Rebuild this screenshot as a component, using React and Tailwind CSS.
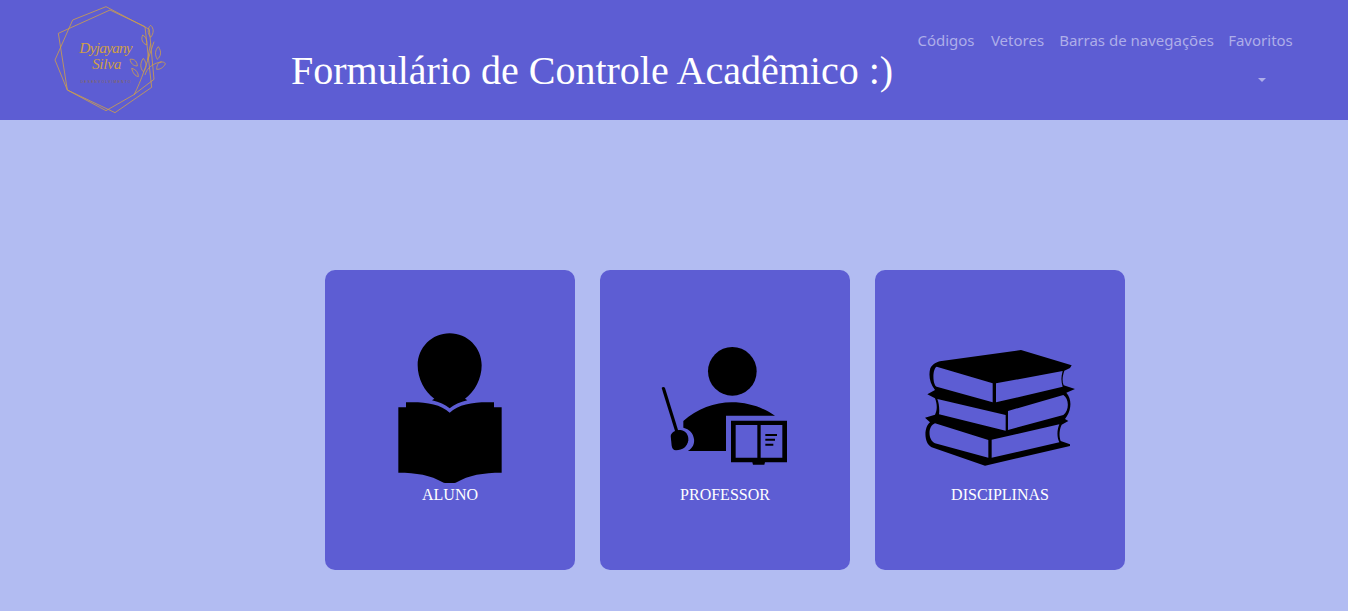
import React from "react";

const NAV = [
  { label: "Códigos", width: "w-[74px]" },
  { label: "Vetores", width: "w-[69px]" },
  { label: "Barras de navegações", width: "w-[169px]" },
  { label: "Favoritos", width: "w-[79px]" },
];

const LogoIcon = () => (
  <svg viewBox="0 0 510 360" className="w-[170px] h-[120px] shrink-0" fill="none" stroke="#cf9f48" strokeWidth="2.4">
    <path d="M128 60 228 20 358 88 372 238 310 285 228 332 112 270 75 180Z" />
    <path d="M85 100 240 30 345 80 365 262 255 338 112 270Z" />
    <path d="M312 285C335 240 350 190 372 125M345 225C352 200 372 190 395 185M352 180 362 130" />
    <path d="M362 76C372 85 372 100 362 112 352 100 352 85 362 76ZM338 105C350 112 352 125 350 135 338 130 332 118 338 105ZM385 140C396 155 392 170 382 178 374 165 375 150 385 140ZM300 178C315 175 322 188 322 198 310 198 302 190 300 178ZM340 175C352 190 350 205 340 215 330 205 330 188 340 175ZM385 190C398 182 406 188 406 192 398 205 390 208 380 208 380 200 382 195 385 190ZM305 205C318 208 325 218 325 230 315 228 308 218 305 205Z" />
    <text x="148" y="158" fill="#cf9f48" stroke="none" fontFamily="'Liberation Serif', serif" fontStyle="italic" fontSize="46" textLength="160">Dyjayany</text>
    <text x="186" y="206" fill="#cf9f48" stroke="none" fontFamily="'Liberation Serif', serif" fontStyle="italic" fontSize="46" textLength="88">Silva</text>
    <text x="152" y="248" fill="#8f6a45" stroke="none" fontFamily="'Liberation Sans', sans-serif" fontSize="10" textLength="150">DESENVOLVIMENTO</text>
  </svg>
);

const StudentIcon = () => (
  <svg viewBox="-15 39 450 450" className="w-[150px] h-[150px]" fill="#000">
    <path d="M209 40C262 40 305 83 305 136 305 175 285 215 255 236L262 241C240 246 222 254 209 265 196 254 178 246 156 241L163 236C133 215 113 175 113 136 113 83 156 40 209 40Z" />
    <path d="M55 262H78V247C130 245 180 250 209 278 238 250 288 245 342 247V262H365V458C310 458 265 465 230 487 222 491 196 491 188 487 153 465 108 458 55 458Z" />
  </svg>
);

const TeacherIcon = () => (
  <svg viewBox="0 -6 450 450" className="w-[150px] h-[150px]" fill="#000">
    <circle cx="247" cy="109" r="73" />
    <path d="M100 258C140 222 195 202 245 202 295 202 340 218 375 242H228V348H113C128 340 134 325 132 312 130 295 118 282 100 278Z" />
    <path d="M35 159C37 155 43 155 45 159L85 288 76 291Z" />
    <path d="M62 302C66 290 78 285 92 285 108 287 116 300 115 316 112 336 98 345 78 346 70 346 66 340 65 332Z" />
    <path fillRule="evenodd" d="M243 257H411V382H345L343 389H309L307 382H243ZM257 270V368H322V270ZM332 270V368H397V270Z" />
    <path d="M346 297H381V303H346ZM346 311H375V317H346ZM346 326H370V332H346Z" />
  </svg>
);

const BooksIcon = () => (
  <svg viewBox="30 -21 450 450" className="w-[150px] h-[150px]">
    <path fill="#000" d="M80 63 318 30 470 76 465 84 448 92C442 110 441 125 446 136L480 147 454 158C470 175 470 205 456 228L450 237 460 243 440 254C432 270 432 290 437 303L465 313 465 318 210 377 50 322C26 310 26 262 45 247L30 233 60 224C68 208 66 190 60 175L37 163 60 150C44 130 40 105 46 85 52 72 66 65 80 63Z" />
    <path fill="#5d5dd3" d="M65 80 233 130V187L65 140C52 134 52 86 65 80ZM243 130 443 93C438 110 438 125 443 140L243 187ZM67 177 272 225V272L72 223C74 208 72 190 67 177ZM279 213 445 165C462 175 464 210 445 225L279 270ZM60 250 220 300V353L60 310C38 300 38 258 60 250ZM230 299 433 253C426 270 425 290 433 307L230 353Z" />
  </svg>
);

const CARDS = [
  { label: "ALUNO", Icon: StudentIcon },
  { label: "PROFESSOR", Icon: TeacherIcon },
  { label: "DISCIPLINAS", Icon: BooksIcon },
];

export default function App() {
  return (
    <div className="min-h-[611px] bg-[#b2bcf2] font-['Liberation_Serif',serif]">
      <header className="h-[120px] bg-[#5d5dd3] flex pl-[30px] pr-[48px]">
        <LogoIcon />
        <h1 className="ml-[91px] mt-[47px] w-[606px] text-[40px] leading-[48px] text-white whitespace-nowrap">
          Formulário de Controle Acadêmico :)
        </h1>
        <nav className="ml-auto flex flex-col items-end pt-[28px] font-['Noto_Sans',sans-serif] text-[15px] leading-[24px] text-[#aeaee9]">
          <ul className="flex">
            {NAV.map((item) => (
              <li key={item.label} className={`${item.width} text-center whitespace-nowrap`}>
                {item.label}
              </li>
            ))}
          </ul>
          <div className="w-[76px] h-[24px] mt-[17px] flex items-center justify-center">
            <span className="mt-[-2px] border-x-[4px] border-x-transparent border-t-[4px] border-t-[#aeaee9]" />
          </div>
        </nav>
      </header>
      <main className="pl-[325px] pt-[150px] flex gap-[25px]">
        {CARDS.map(({ label, Icon }) => (
          <div key={label} className="w-[250px] h-[300px] rounded-[10px] bg-[#5d5dd3] flex flex-col items-center pt-[63px]">
            <Icon />
            <span className="mt-[2px] text-[16px] leading-[20px] text-white">{label}</span>
          </div>
        ))}
      </main>
    </div>
  );
}
